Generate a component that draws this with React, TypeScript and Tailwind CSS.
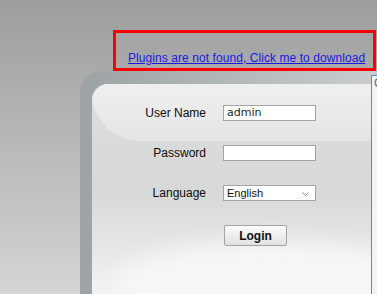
import { useState } from 'react';

const font = { fontFamily: '"Liberation Sans", Arial, sans-serif' };

function Field({ label, children }: { label: string; children: React.ReactNode }) {
  return (
    <>
      <span className="flex h-[16px] items-center justify-end pr-[1px] text-[12px] text-[#0c0c0c]">{label}</span>
      {children}
    </>
  );
}

export default function App() {
  const [user, setUser] = useState('admin');
  const [pass, setPass] = useState('');
  const [lang, setLang] = useState('English');

  return (
    <div
      className="relative h-[294px] w-[377px] overflow-hidden bg-gradient-to-b from-[#9d9d9d] to-[#d5d5d5]"
      style={font}
    >
      <div className="pt-[30px]">
        <div className="ml-[113px] flex h-[41px] w-[263px] items-end border-[3px] border-[#ff0000] pb-[3px] pl-[12px]">
          <a href="#" className="text-[12px] leading-[14px] tracking-[0.07px] text-[#1a1ae6] underline">
            Plugins are not found, Click me to download
          </a>
        </div>
      </div>

      <div className="ml-[80px] h-[230px] rounded-tl-[22px] bg-gradient-to-r from-[#9da2a4] to-[#c9cdcf] pl-[12px] pt-[13px]">
        <div className="relative h-full overflow-hidden rounded-tl-[16px] bg-gradient-to-b from-[#dcdddd] via-[#d7d9d9] to-[#f4f5f5]">
          <div className="absolute left-0 top-0 h-[57px] w-[320px] rounded-bl-[48px] bg-gradient-to-b from-[#efefef] to-[#e4e5e5]" />
          <div className="absolute bottom-[-30px] left-[20px] h-[90px] w-[320px] rounded-[50%] bg-[#f5f6f6] blur-[10px]" />

          <div className="relative grid grid-cols-[115px_93px] gap-x-[16px] gap-y-[24px] pt-[21px]">
            <Field label="User Name">
              <input
                value={user}
                onChange={(e) => setUser(e.target.value)}
                className="block h-[16px] w-[93px] border border-[#a3a3a3] bg-white px-[3px] text-[11px] text-[#222] outline-none"
                style={{ fontFamily: 'Tahoma, "DejaVu Sans", sans-serif' }}
              />
            </Field>
            <Field label="Password">
              <input
                type="password"
                value={pass}
                onChange={(e) => setPass(e.target.value)}
                className="block h-[16px] w-[93px] border border-[#a3a3a3] bg-white px-[3px] text-[11px] outline-none"
              />
            </Field>
            <Field label="Language">
              <div className="relative h-[16px] w-[93px]">
                <select
                  value={lang}
                  onChange={(e) => setLang(e.target.value)}
                  className="block h-[16px] w-[93px] appearance-none border border-[#a3a3a3] bg-white py-0 pl-[3px] text-[11px] leading-[14px] text-[#111] outline-none"
                >
                  <option>English</option>
                </select>
                <svg
                  className="pointer-events-none absolute right-[7px] top-[7px]"
                  width="7"
                  height="4"
                  viewBox="0 0 7 4"
                >
                  <path d="M0.5 0.5 L3.5 3.5 L6.5 0.5" fill="none" stroke="#888" strokeWidth="1" />
                </svg>
              </div>
            </Field>
            <span />
            <button className="ml-[1px] h-[21px] w-[63px] rounded-[2px] border border-[#a5a5a5] bg-gradient-to-b from-[#fcfcfc] to-[#e1e1e1] text-[12px] font-bold text-[#111]">
              Login
            </button>
          </div>
        </div>
      </div>

      <div className="absolute left-[371px] top-[75px] h-[230px] w-[20px] border border-[#4a8fd6] bg-[#f3f3f3] pl-[2px] text-[12px] leading-[14px] text-[#666]">
        C
      </div>
    </div>
  );
}
